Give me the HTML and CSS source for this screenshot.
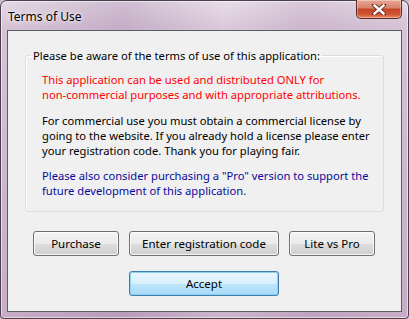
FILE: index.html
```html
<!DOCTYPE html>
<html>
<head>
<meta charset="utf-8">
<link rel="stylesheet" href="styles.css">
</head>
<body>
<div class="window">
  <div class="titlebar">
    <span class="title">Terms of Use</span>
    <div class="close">
      <svg width="14" height="11" viewBox="0 0 14 11">
        <path d="M2 1 L12 10 M12 1 L2 10" stroke="#6b2a20" stroke-width="4.2" stroke-linecap="square"/>
        <path d="M2.5 1.5 L11.5 9.5 M11.5 1.5 L2.5 9.5" stroke="#ffffff" stroke-width="2.4" stroke-linecap="square"/>
      </svg>
    </div>
  </div>
  <div class="client">
    <fieldset class="group">
      <legend>Please be aware of the terms of use of this application:</legend>
      <p class="red">This application can be used and distributed ONLY for<br>non-commercial purposes and with appropriate attributions.</p>
      <p class="black">For commercial use you must obtain a commercial license by<br>going to the website. If you already hold a license please enter<br>your registration code. Thank you for playing fair.</p>
      <p class="blue">Please also consider purchasing a "Pro" version to support the<br>future development of this application.</p>
    </fieldset>
    <div class="row">
      <button class="btn small">Purchase</button>
      <button class="btn wide">Enter registration code</button>
      <button class="btn small">Lite vs Pro</button>
    </div>
    <div class="row center">
      <button class="btn wide default">Accept</button>
    </div>
  </div>
</div>
</body>
</html>
```

FILE: styles.css
```css
html, body {
  margin: 0;
  padding: 0;
  width: 409px;
  height: 319px;
  overflow: hidden;
  background: #cdb8cc;
}

.window {
  box-sizing: border-box;
  width: 409px;
  height: 319px;
  border: 1px solid #4a3f4c;
  border-radius: 7px 7px 4px 4px;
  background:
    linear-gradient(90deg, rgba(255,255,255,0.0) 0%, rgba(140,110,150,0.25) 30%, rgba(255,255,255,0.1) 55%, rgba(160,130,165,0.2) 75%, rgba(255,255,255,0) 100%),
    linear-gradient(180deg, #e6d9e6 0%, #d7c4d7 8%, #cdb6cd 60%, #c7adc7 100%);
  box-shadow: inset 0 0 0 1px rgba(255,255,255,0.55);
  padding: 0 6px 6px 6px;
  display: flex;
  flex-direction: column;
  font-family: "Noto Sans", "Open Sans", sans-serif;
  font-size: 11.2px;
}

.titlebar {
  height: 29px;
  display: flex;
  align-items: flex-start;
  justify-content: space-between;
}

.title {
  margin-top: 7px;
  margin-left: 1px;
  color: #000;
  font-size: 12px;
  text-shadow: 0 0 6px rgba(255,255,255,0.9), 0 0 3px rgba(255,255,255,0.8);
}

.close {
  width: 46px;
  height: 19px;
  margin-top: -1px;
  box-sizing: border-box;
  border: 1px solid #5a2a26;
  border-top: none;
  border-radius: 0 0 5px 5px;
  background: linear-gradient(180deg, #e8a696 0%, #d9806a 45%, #c4442a 50%, #d25634 80%, #e98a63 100%);
  box-shadow: inset 0 0 0 1px rgba(255,255,255,0.35);
  display: flex;
  align-items: center;
  justify-content: center;
}

.close svg {
  display: block;
}

.client {
  flex: 1;
  border: 1px solid #5a5e66;
  background: #f0f0f0;
  padding: 17px 17px 0 17px;
  display: flex;
  flex-direction: column;
}

.group {
  margin: 0;
  border: 1px solid #d5dfe5;
  border-radius: 3px;
  padding: 4px 0 13px 16px;
  min-width: 0;
  box-shadow: inset 1px 1px 0 #fff;
}

.group legend {
  padding: 0 2px;
  margin-left: -11px;
  color: #000;
  line-height: 15px;
}

.group p {
  margin: 10.5px 0 0 0;
  line-height: 15px;
  white-space: nowrap;
}

.group p:first-of-type {
  margin-top: 5px;
}

.red { color: #ff0000; }
.black { color: #000; }
.blue { color: #0a0a9a; }

.row {
  display: flex;
  gap: 10px;
  margin-top: 19px;
  padding-left: 8px;
}

.row.center {
  margin-top: 15px;
  padding-left: 104px;
}

.btn {
  box-sizing: border-box;
  height: 25px;
  border: 1px solid #707070;
  border-radius: 3px;
  font-family: "Noto Sans", "Open Sans", sans-serif;
  font-size: 11.5px;
  color: #000;
  padding: 0;
  background: linear-gradient(180deg, #f2f2f2 0%, #ebebeb 50%, #dddddd 51%, #cfcfcf 100%);
  box-shadow: inset 0 0 0 1px rgba(255,255,255,0.8);
}

.btn.small { width: 86px; }
.btn.wide { width: 150px; }

.btn.default {
  border-color: #3c7fb1;
  background: linear-gradient(180deg, #eaf6fd 0%, #d9f0fc 50%, #bee6fd 51%, #a7d9f5 100%);
  box-shadow: inset 0 0 0 1px #8fd0f0;
}
```
